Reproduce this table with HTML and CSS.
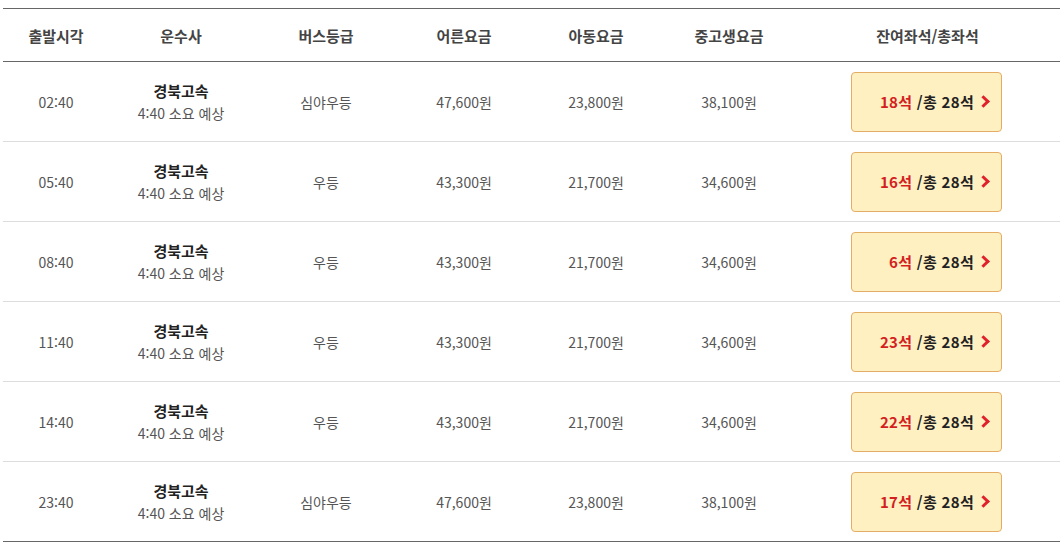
FILE: index.html
```html
<!DOCTYPE html>
<html lang="ko">
<head>
    <meta charset="UTF-8">
    <meta name="viewport" content="width=device-width, initial-scale=1.0">
    <title>배차 조회</title>
    <link rel="stylesheet" href="styles.css">
</head>
<body>
    <div class="wrap">
        <table class="bus-table">
            <colgroup>
                <col style="width:106px">
                <col style="width:144px">
                <col style="width:146px">
                <col style="width:130px">
                <col style="width:134px">
                <col style="width:132px">
                <col>
            </colgroup>
            <thead>
                <tr>
                    <th>출발시각</th>
                    <th>운수사</th>
                    <th>버스등급</th>
                    <th>어른요금</th>
                    <th>아동요금</th>
                    <th>중고생요금</th>
                    <th>잔여좌석/총좌석</th>
                </tr>
            </thead>
            <tbody>
                <tr>
                    <td>02:40</td>
                    <td><strong class="company">경북고속</strong>4:40 소요 예상</td>
                    <td>심야우등</td>
                    <td>47,600원</td>
                    <td>23,800원</td>
                    <td>38,100원</td>
                    <td class="seat-cell"><a class="seat-btn" href="#"><span class="left">18석</span> /총 28석<span class="arrow"></span></a></td>
                </tr>
                <tr>
                    <td>05:40</td>
                    <td><strong class="company">경북고속</strong>4:40 소요 예상</td>
                    <td>우등</td>
                    <td>43,300원</td>
                    <td>21,700원</td>
                    <td>34,600원</td>
                    <td class="seat-cell"><a class="seat-btn" href="#"><span class="left">16석</span> /총 28석<span class="arrow"></span></a></td>
                </tr>
                <tr>
                    <td>08:40</td>
                    <td><strong class="company">경북고속</strong>4:40 소요 예상</td>
                    <td>우등</td>
                    <td>43,300원</td>
                    <td>21,700원</td>
                    <td>34,600원</td>
                    <td class="seat-cell"><a class="seat-btn" href="#"><span class="left">6석</span> /총 28석<span class="arrow"></span></a></td>
                </tr>
                <tr>
                    <td>11:40</td>
                    <td><strong class="company">경북고속</strong>4:40 소요 예상</td>
                    <td>우등</td>
                    <td>43,300원</td>
                    <td>21,700원</td>
                    <td>34,600원</td>
                    <td class="seat-cell"><a class="seat-btn" href="#"><span class="left">23석</span> /총 28석<span class="arrow"></span></a></td>
                </tr>
                <tr>
                    <td>14:40</td>
                    <td><strong class="company">경북고속</strong>4:40 소요 예상</td>
                    <td>우등</td>
                    <td>43,300원</td>
                    <td>21,700원</td>
                    <td>34,600원</td>
                    <td class="seat-cell"><a class="seat-btn" href="#"><span class="left">22석</span> /총 28석<span class="arrow"></span></a></td>
                </tr>
                <tr>
                    <td>23:40</td>
                    <td><strong class="company">경북고속</strong>4:40 소요 예상</td>
                    <td>심야우등</td>
                    <td>47,600원</td>
                    <td>23,800원</td>
                    <td>38,100원</td>
                    <td class="seat-cell"><a class="seat-btn" href="#"><span class="left">17석</span> /총 28석<span class="arrow"></span></a></td>
                </tr>
            </tbody>
        </table>
    </div>
</body>
</html>
```

FILE: styles.css
```css
body {
    margin: 0;
    padding: 0;
    background-color: #fff;
    font-family: "Noto Sans CJK KR", "Noto Sans", sans-serif;
    color: #555;
}
.wrap {
    padding: 8px 0 0 3px;
}
.bus-table {
    width: 1057px;
    border-collapse: collapse;
    table-layout: fixed;
    border-top: 1px solid #666;
    border-bottom: 1px solid #666;
}
.bus-table th {
    height: 52px;
    font-size: 15px;
    font-weight: bold;
    color: #444;
    text-align: center;
    border-bottom: 1px solid #666;
    padding: 0;
}
.bus-table td {
    height: 79px;
    font-size: 14px;
    color: #555;
    text-align: center;
    border-top: 1px solid #ddd;
    padding: 0;
    line-height: 22px;
}
.bus-table tbody tr:first-child td {
    border-top: none;
}
.company {
    display: block;
    font-size: 15px;
    color: #222;
}
.seat-cell {
    text-align: left;
}
.seat-btn {
    display: flex;
    align-items: center;
    justify-content: flex-end;
    width: 151px;
    height: 60px;
    margin-left: 56px;
    padding-right: 13px;
    box-sizing: border-box;
    background-color: #fff0c2;
    border: 1px solid #e4ad67;
    border-radius: 4px;
    font-size: 15px;
    font-weight: bold;
    color: #222;
    text-decoration: none;
    white-space: pre;
    letter-spacing: 0.3px;
}
.seat-btn .left {
    color: #d31f1f;
}
.arrow {
    display: inline-block;
    width: 6px;
    height: 6px;
    margin-left: 5px;
    border-top: 3px solid #e0202a;
    border-right: 3px solid #e0202a;
    transform: rotate(45deg);
}
```
